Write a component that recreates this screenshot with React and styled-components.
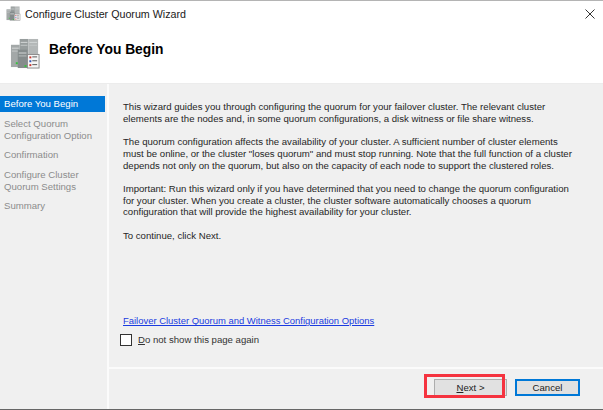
import styled, { createGlobalStyle } from "styled-components";

const Global = createGlobalStyle`
  html, body { margin: 0; padding: 0; background: #fff; }
  body { font-family: "Liberation Sans", Arial, sans-serif; color: #222; }
`;

const Wizard = styled.div`
  width: 603px;
  height: 410px;
  display: flex;
  flex-direction: column;
  overflow: hidden;
  border-top: 1px solid #b4b4b4;
  border-bottom: 1px solid #666;
  box-sizing: border-box;
`;

const TitleBar = styled.div`
  height: 25px;
  display: flex;
  align-items: center;
  padding: 0 8px 0 6px;
  gap: 4px;
  font-size: 10.7px;
  color: #1a1a1a;
`;

const TitleText = styled.span`
  flex: 1;
`;

const Header = styled.div`
  height: 58px;
  box-sizing: border-box;
  display: flex;
  align-items: center;
  padding: 0 0 2px 10px;
  gap: 8px;
  border-bottom: 1px solid #ececec;
`;

const Heading = styled.h1`
  margin: 0 0 8px;
  font-size: 13.8px;
  font-weight: bold;
  color: #000;
`;

const Body = styled.div`
  flex: 1;
  display: flex;
  background: #f0f0f0;
`;

const Sidebar = styled.nav`
  width: 107px;
  flex: none;
  padding-top: 12px;
  border-right: 2px solid #fbfbfb;
  font-size: 9.6px;
`;

const Step = styled.div`
  padding: 2px 4px;
  margin: 0 2px 3.5px 0;
  line-height: 12px;
  background: ${(p) => (p.$active ? "#0078d7" : "transparent")};
  color: ${(p) => (p.$active ? "#fff" : "#8c8c8c")};
`;

const Main = styled.div`
  flex: 1;
  display: flex;
  flex-direction: column;
`;

const Content = styled.main`
  flex: 1;
  display: flex;
  flex-direction: column;
  padding: 17px 0 0 14px;
  font-size: 9.6px;
  line-height: 11.7px;
  color: #262626;
`;

const Para = styled.p`
  margin: 0 0 11.7px;
`;

const Line = styled.span`
  display: block;
  white-space: nowrap;
`;

const Link = styled.a`
  margin-top: auto;
  font-size: 9.45px;
  color: #1a3be0;
  text-decoration: underline;
`;

const CheckRow = styled.label`
  display: flex;
  align-items: center;
  gap: 6px;
  margin: 7px 0 21px -3px;
  font-size: 9.6px;
  color: #333;
`;

const CheckBox = styled.span`
  width: 10px;
  height: 10px;
  border: 1px solid #333;
  background: #fff;
`;

const Footer = styled.div`
  height: 42px;
  box-sizing: border-box;
  display: flex;
  justify-content: flex-end;
  align-items: flex-start;
  gap: 8px;
  padding: 10px 23px 0 0;
  border-top: 2px solid #fbfbfb;
`;

const Button = styled.button`
  position: relative;
  width: ${(p) => (p.$primary ? "65px" : "73px")};
  height: 17px;
  padding: 0;
  font-family: inherit;
  font-size: 9.6px;
  color: #222;
  background: #e1e1e1;
  border: ${(p) => (p.$primary ? "2px solid #0078d7" : "1px solid #adadad")};
  box-sizing: border-box;
`;

const Callout = styled.span`
  position: absolute;
  left: -11px;
  top: -6px;
  width: 81px;
  height: 24px;
  box-sizing: border-box;
  border: 3px solid #f5333f;
`;

function ClusterIcon({ size }) {
  return (
    <svg width={size} height={size} viewBox="0 0 32 32">
      <rect x="1" y="7" width="9" height="23" fill="#a3a8a8" />
      <rect x="10" y="1" width="9" height="20" fill="#979d9d" />
      <rect x="19" y="1" width="10" height="16" fill="#b3b7b7" />
      <rect x="8" y="12" width="10" height="19" fill="#858c8c" />
      <rect x="2" y="10" width="7" height="1" fill="#d5d8d8" />
      <rect x="2" y="13" width="6" height="1" fill="#c4c8c8" />
      <rect x="11" y="4" width="7" height="1" fill="#d5d8d8" />
      <rect x="11" y="7" width="7" height="1" fill="#c4c8c8" />
      <rect x="20" y="4" width="8" height="1" fill="#d5d8d8" />
      <rect x="20" y="7" width="8" height="1" fill="#c4c8c8" />
      <rect x="9" y="15" width="8" height="1" fill="#d5d8d8" />
      <rect x="9" y="18" width="8" height="1" fill="#b8bdbd" />
      <rect x="6" y="25" width="2" height="2" fill="#35c43c" />
      <rect x="15" y="28" width="2" height="2" fill="#35c43c" />
      <rect x="18" y="17" width="12" height="14" fill="#f6f6f6" stroke="#8b8b8b" />
      <rect x="20" y="19" width="2" height="2" fill="#c8372f" />
      <rect x="23" y="19" width="5" height="1" fill="#555" />
      <rect x="20" y="23" width="2" height="2" fill="#2f55b5" />
      <rect x="23" y="23" width="5" height="1" fill="#555" />
      <rect x="20" y="27" width="2" height="2" fill="#c8372f" />
      <rect x="23" y="27" width="5" height="1" fill="#555" />
    </svg>
  );
}

export default function App() {
  return (
    <Wizard>
      <Global />
      <TitleBar>
        <ClusterIcon size={15} />
        <TitleText>Configure Cluster Quorum Wizard</TitleText>
        <svg width="10" height="10" viewBox="0 0 10 10">
          <path d="M0.5 0.5 L9.5 9.5 M9.5 0.5 L0.5 9.5" stroke="#333" strokeWidth="1" />
        </svg>
      </TitleBar>
      <Header>
        <ClusterIcon size={31} />
        <Heading>Before You Begin</Heading>
      </Header>
      <Body>
        <Sidebar>
          <Step $active>Before You Begin</Step>
          <Step>
            Select Quorum
            <br />
            Configuration Option
          </Step>
          <Step>Confirmation</Step>
          <Step>
            Configure Cluster
            <br />
            Quorum Settings
          </Step>
          <Step>Summary</Step>
        </Sidebar>
        <Main>
          <Content>
            <Para>
              <Line>This wizard guides you through configuring the quorum for your failover cluster. The relevant cluster</Line>
              <Line>elements are the nodes and, in some quorum configurations, a disk witness or file share witness.</Line>
            </Para>
            <Para>
              <Line>The quorum configuration affects the availability of your cluster. A sufficient number of cluster elements</Line>
              <Line>must be online, or the cluster "loses quorum" and must stop running. Note that the full function of a cluster</Line>
              <Line>depends not only on the quorum, but also on the capacity of each node to support the clustered roles.</Line>
            </Para>
            <Para>
              <Line>Important: Run this wizard only if you have determined that you need to change the quorum configuration</Line>
              <Line>for your cluster. When you create a cluster, the cluster software automatically chooses a quorum</Line>
              <Line>configuration that will provide the highest availability for your cluster.</Line>
            </Para>
            <Para>
              <Line>To continue, click Next.</Line>
            </Para>
            <Link>Failover Cluster Quorum and Witness Configuration Options</Link>
            <CheckRow>
              <CheckBox />
              <span>
                <u>D</u>o not show this page again
              </span>
            </CheckRow>
          </Content>
          <Footer>
            <Button>
              <u>N</u>ext &gt;
              <Callout />
            </Button>
            <Button $primary>Cancel</Button>
          </Footer>
        </Main>
      </Body>
    </Wizard>
  );
}
